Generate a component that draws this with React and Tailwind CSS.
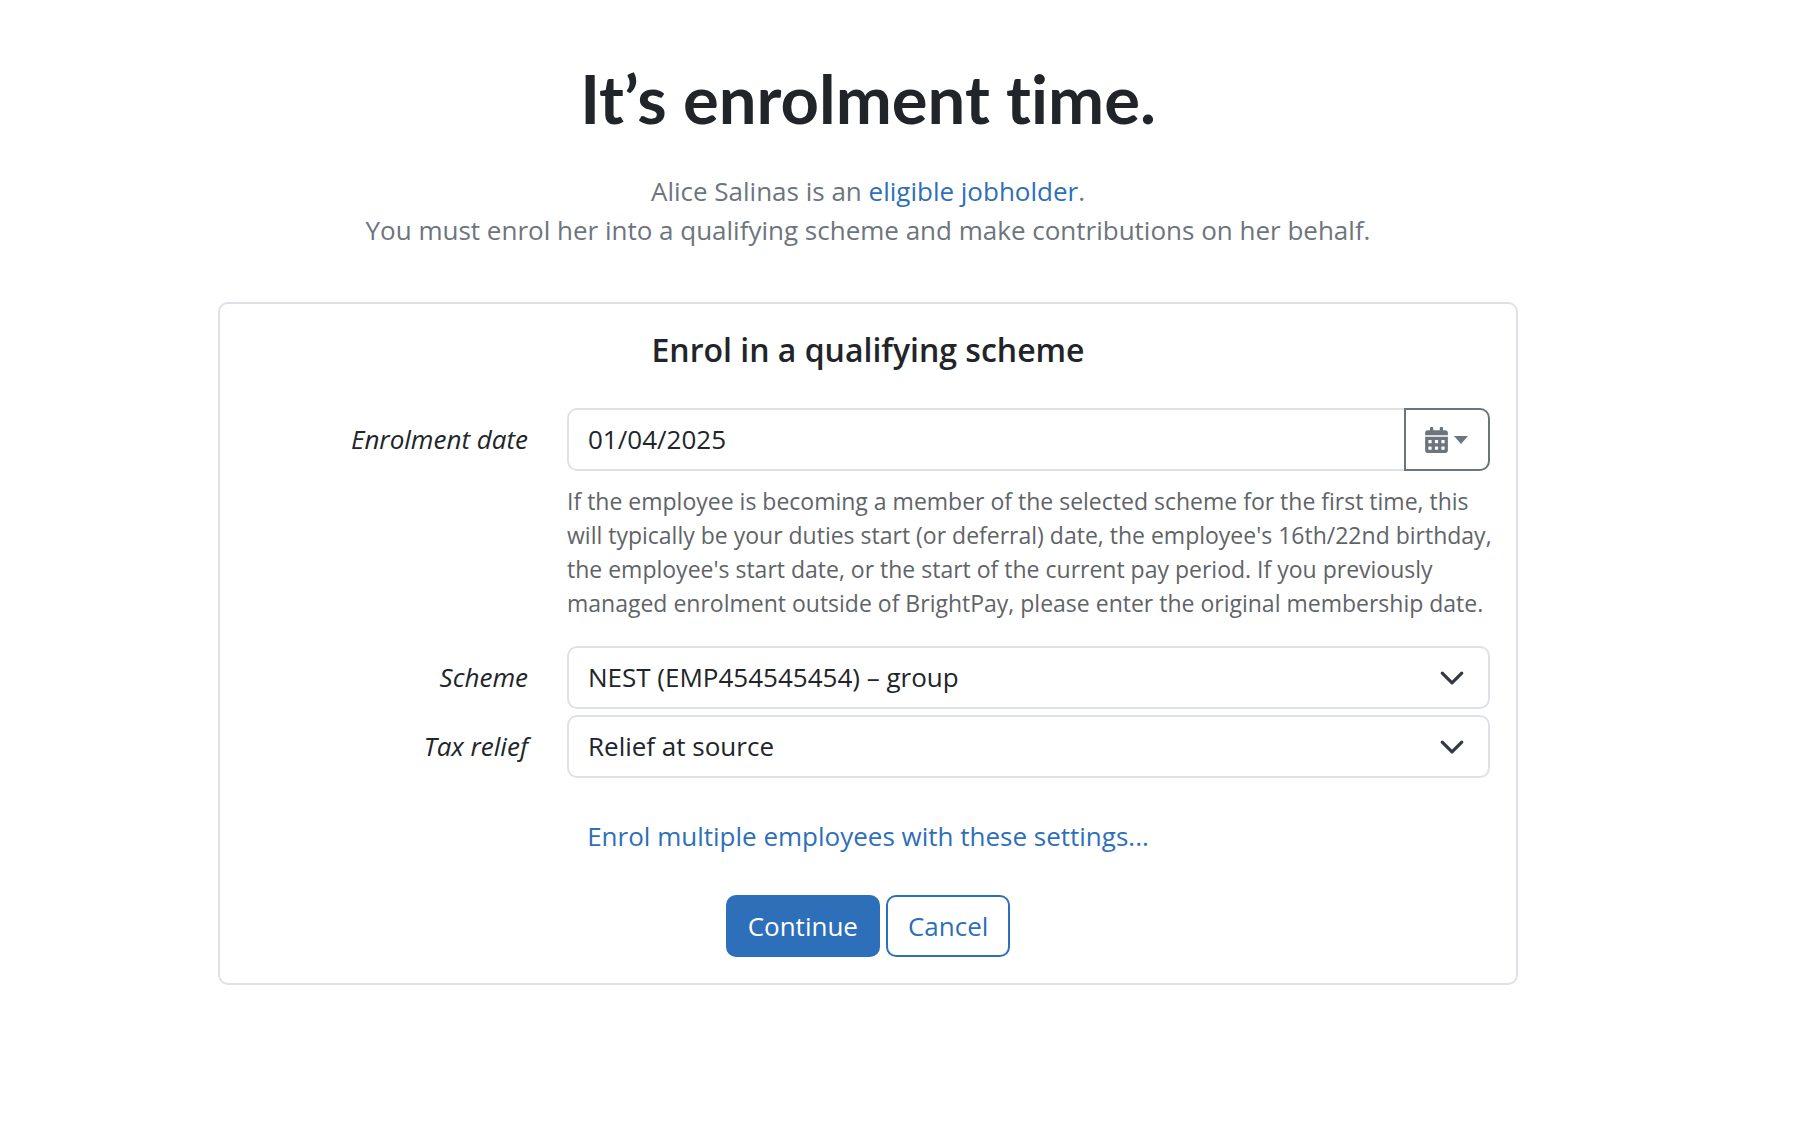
import React, { useState } from "react";
import { FaCalendarAlt } from "react-icons/fa";

const LINK = "text-[#2e6fb9] hover:underline";
const FIELD = "h-[63px] w-full border-2 border-[#dee2e6] bg-white text-[#212529] focus:outline-none focus:border-[#2e6fb9]";

function FormRow({ id, label, children }) {
  return (
    <div className="flex items-start gap-[39px]">
      <label htmlFor={id} className="w-[282px] shrink-0 py-3 text-right italic">
        {label}
      </label>
      <div className="min-w-0 flex-1">{children}</div>
    </div>
  );
}

function SelectField({ id, value, onChange, options }) {
  return (
    <div className="relative">
      <select
        id={id}
        value={value}
        onChange={(e) => onChange(e.target.value)}
        className={`${FIELD} appearance-none rounded-[10px] pl-[19px] pr-16`}
      >
        {options.map((o) => (
          <option key={o}>{o}</option>
        ))}
      </select>
      <svg
        viewBox="0 0 16 16"
        className="pointer-events-none absolute right-[25px] top-1/2 h-[26px] w-[26px] -translate-y-1/2"
        fill="none"
        stroke="#343a40"
        strokeWidth="2"
        strokeLinecap="round"
        strokeLinejoin="round"
      >
        <path d="m2 5 6 6 6-6" />
      </svg>
    </div>
  );
}

export default function App() {
  const [date, setDate] = useState("01/04/2025");
  const [scheme, setScheme] = useState("NEST (EMP454545454) – group");
  const [relief, setRelief] = useState("Relief at source");

  return (
    <div className="min-h-screen bg-white pl-4 pr-[84px] pt-[58px] pb-16 font-['Open_Sans',sans-serif] text-[26px] leading-[39px] text-[#212529]">
      <main className="mx-auto max-w-[1300px]">
        {/* Intro */}
        <h1 className="text-center font-['Lato',sans-serif] text-[67px] leading-[80px] font-bold [font-variant-ligatures:none]">
          It’s enrolment time.
        </h1>
        <p className="mt-[34px] text-center text-[#6c757d]">
          Alice Salinas is an <a href="#jobholder" className={LINK}>eligible jobholder</a>.
          <br />
          You must enrol her into a qualifying scheme and make contributions on her behalf.
        </p>

        {/* Enrolment form */}
        <form
          onSubmit={(e) => e.preventDefault()}
          className="mt-[52px] rounded-[10px] border-2 border-[#dee2e6] p-[26px]"
        >
          <h2 className="text-center text-[32px] leading-[40px] font-semibold">Enrol in a qualifying scheme</h2>

          <div className="mt-[38px]">
            <FormRow id="date" label="Enrolment date">
              <div className="flex">
                <input
                  id="date"
                  type="text"
                  value={date}
                  onChange={(e) => setDate(e.target.value)}
                  className={`${FIELD} min-w-0 flex-1 rounded-l-[10px] border-r-0 px-[19px] pb-0.5`}
                />
                <button
                  type="button"
                  aria-label="Choose date"
                  className="flex w-[86px] shrink-0 items-center justify-center gap-[6px] rounded-r-[10px] border-2 border-[#6c757d] pr-0.5 text-[#6c757d]"
                >
                  <FaCalendarAlt className="h-[26px] w-[23px]" />
                  <svg viewBox="0 0 14 8" className="h-2 w-[14px]" fill="currentColor">
                    <path d="M0 0h14L7 8z" />
                  </svg>
                </button>
              </div>
              <p className="-mr-2 mt-[13px] text-[23px] leading-[34px] text-[#5f6468]">
                If the employee is becoming a member of the selected scheme for the first time, this will typically be
                your duties start (or deferral) date, the employee's 16th/22nd birthday, the employee's start date, or
                the start of the current pay period. If you previously managed enrolment outside of BrightPay, please
                enter the original membership date.
              </p>
            </FormRow>
          </div>

          <div className="mt-[26px] flex flex-col gap-[6px]">
            <FormRow id="scheme" label="Scheme">
              <SelectField
                id="scheme"
                value={scheme}
                onChange={setScheme}
                options={["NEST (EMP454545454) – group"]}
              />
            </FormRow>
            <FormRow id="relief" label="Tax relief">
              <SelectField id="relief" value={relief} onChange={setRelief} options={["Relief at source"]} />
            </FormRow>
          </div>

          <p className="mt-[39px] text-center">
            <a href="#multiple" className={LINK}>Enrol multiple employees with these settings...</a>
          </p>

          <div className="mt-[39px] flex justify-center gap-[6px]">
            <button
              type="submit"
              className="h-[62px] rounded-[10px] border-2 border-[#2e6fb9] bg-[#2e6fb9] px-5 text-white"
            >
              Continue
            </button>
            <button
              type="button"
              className="h-[62px] rounded-[10px] border-2 border-[#2e6fb9] bg-white px-5 text-[#2e6fb9]"
            >
              Cancel
            </button>
          </div>
        </form>
      </main>
    </div>
  );
}
